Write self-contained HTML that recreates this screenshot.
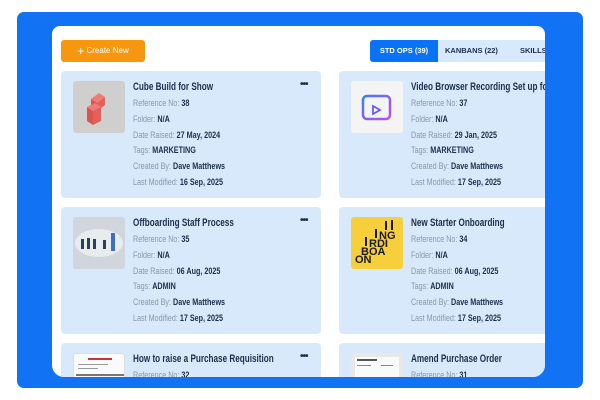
<!DOCTYPE html>
<html><head><style>
*{margin:0;padding:0;box-sizing:border-box}
html,body{width:600px;height:400px;overflow:hidden}
body{background:#fff;position:relative;font-family:"Liberation Sans",sans-serif}
.frame{position:absolute;left:17px;top:12px;width:566px;height:376px;background:#1173f4;border-radius:7px}
.panel{position:absolute;left:52px;top:26px;width:493px;height:351px;background:#fff;border-radius:8px 8px 12px 12px;overflow:hidden}
.btn{position:absolute;left:9px;top:14px;width:84px;height:22px;background:#f7960f;border-radius:3px;color:#fff;font-size:8px;line-height:22px;text-align:center;white-space:nowrap}
.btn b{font-size:12px;font-weight:400;vertical-align:top}
.tabs{position:absolute;left:318px;top:14px;height:22px;width:200px;background:#d8e9fc;border-radius:3px;font-size:7.5px;font-weight:bold;color:#1b2f4d}
.tabs span{position:absolute;top:0;line-height:22px;white-space:nowrap}
.tab1{left:0;width:68px;height:22px;background:#0a72f5;color:#fff;border-radius:3px 0 0 3px;text-align:center}
.card{position:absolute;width:260px;height:127px;background:#d8e9fc;border-radius:4px;overflow:hidden}
.thumb{position:absolute;left:12px;top:10px;width:52px;height:52px;border-radius:3px;background:#d9d9d9;overflow:hidden}
.t{position:absolute;left:72px;top:10px;font-size:11px;font-weight:bold;color:#1b2f4d;white-space:nowrap;transform:scaleX(0.74);transform-origin:left}
.l{position:absolute;left:72px;font-size:9px;color:#8a96a8;white-space:nowrap;transform:scaleX(0.8);transform-origin:left}
.l b{color:#1b2f4d}
.dots{position:absolute;left:239px;top:8px;font-size:10px;font-weight:bold;color:#1b2f4d;letter-spacing:-1px}
</style></head><body>
<div class="frame"></div>
<div class="panel">
<div class="btn"><b>+</b>&nbsp;Create New</div>
<div class="tabs"><span class="tab1">STD OPS (39)</span><span style="left:75px">KANBANS (22)</span><span style="left:150px">SKILLS</span></div>

<div class="card" style="left:9px;top:45px">
<div class="thumb" style="background:#cfcfcd"><svg width="52" height="52"><polygon points="18,18 26,12 32,16 24,22" fill="#f07a78"/><polygon points="18,18 24,22 24,30 18,26" fill="#d9534f"/><polygon points="24,22 32,16 32,24 24,30" fill="#e35f5c"/><polygon points="14,26 22,22 28,26 20,30" fill="#f07a78"/><polygon points="20,30 28,26 28,40 20,44" fill="#e35f5c"/><polygon points="14,26 20,30 20,44 14,40" fill="#d9534f"/></svg></div>
<div class="t">Cube Build for Show</div><div class="dots">•••</div>
<div class="l" style="top:27px">Reference No: <b>38</b></div>
<div class="l" style="top:43px">Folder: <b>N/A</b></div>
<div class="l" style="top:59px">Date Raised: <b>27 May, 2024</b></div>
<div class="l" style="top:74px">Tags: <b>MARKETING</b></div>
<div class="l" style="top:90px">Created By: <b>Dave Matthews</b></div>
<div class="l" style="top:106px">Last Modified: <b>16 Sep, 2025</b></div>
</div>

<div class="card" style="left:287px;top:45px">
<div class="thumb" style="background:#f4f4f4"><svg width="52" height="52"><defs><linearGradient id="g" x1="0" y1="0" x2="1" y2="1"><stop offset="0" stop-color="#3b7cf5"/><stop offset="1" stop-color="#c04cf0"/></linearGradient></defs><rect x="12" y="15" width="27" height="23" rx="4" fill="none" stroke="url(#g)" stroke-width="2.5"/><line x1="12" y1="21" x2="39" y2="21" stroke="url(#g)" stroke-width="2"/><path d="M22 25 L29 29 L22 33 Z" fill="none" stroke="#6a5cf2" stroke-width="1.8"/></svg></div>
<div class="t">Video Browser Recording Set up for</div>
<div class="l" style="top:27px">Reference No: <b>37</b></div>
<div class="l" style="top:43px">Folder: <b>N/A</b></div>
<div class="l" style="top:59px">Date Raised: <b>29 Jan, 2025</b></div>
<div class="l" style="top:74px">Tags: <b>MARKETING</b></div>
<div class="l" style="top:90px">Created By: <b>Dave Matthews</b></div>
<div class="l" style="top:106px">Last Modified: <b>17 Sep, 2025</b></div>
</div>

<div class="card" style="left:9px;top:181px">
<div class="thumb" style="background:#d0d6dc"><svg width="52" height="52"><ellipse cx="26" cy="26" rx="24" ry="14" fill="#e8ecef"/><g fill="#2d3e57"><rect x="8" y="22" width="3" height="10"/><rect x="14" y="21" width="3" height="11"/><rect x="20" y="22" width="3" height="10"/><rect x="30" y="23" width="3" height="9"/><rect x="38" y="16" width="4" height="18" fill="#3a6fc4"/></g></svg></div>
<div class="t">Offboarding Staff Process</div><div class="dots">•••</div>
<div class="l" style="top:27px">Reference No: <b>35</b></div>
<div class="l" style="top:43px">Folder: <b>N/A</b></div>
<div class="l" style="top:59px">Date Raised: <b>06 Aug, 2025</b></div>
<div class="l" style="top:74px">Tags: <b>ADMIN</b></div>
<div class="l" style="top:90px">Created By: <b>Dave Matthews</b></div>
<div class="l" style="top:106px">Last Modified: <b>17 Sep, 2025</b></div>
</div>

<div class="card" style="left:287px;top:181px">
<div class="thumb" style="background:#f6cf3a"><svg width="52" height="52"><g font-family="Liberation Sans" font-weight="bold" font-size="11" fill="#1a1a1a"><text x="28" y="22">NG</text><text x="18" y="30">RDI</text><text x="10" y="38">BOA</text><text x="4" y="46">ON</text></g><g fill="#1a1a1a"><rect x="34" y="4" width="2" height="9"/><rect x="40" y="3" width="2" height="10"/><rect x="24" y="12" width="2" height="9"/><rect x="14" y="20" width="2" height="9"/></g></svg></div>
<div class="t">New Starter Onboarding</div>
<div class="l" style="top:27px">Reference No: <b>34</b></div>
<div class="l" style="top:43px">Folder: <b>N/A</b></div>
<div class="l" style="top:59px">Date Raised: <b>06 Aug, 2025</b></div>
<div class="l" style="top:74px">Tags: <b>ADMIN</b></div>
<div class="l" style="top:90px">Created By: <b>Dave Matthews</b></div>
<div class="l" style="top:106px">Last Modified: <b>17 Sep, 2025</b></div>
</div>

<div class="card" style="left:9px;top:317px">
<div class="thumb" style="background:#fafafa;border:1px solid #ddd"><svg width="52" height="52"><rect x="14" y="4" width="24" height="2" fill="#c33"/><rect x="4" y="10" width="30" height="1" fill="#999"/><rect x="4" y="14" width="20" height="1" fill="#999"/><rect x="2" y="20" width="48" height="2" fill="#777"/></svg></div>
<div class="t">How to raise a Purchase Requisition</div><div class="dots">•••</div>
<div class="l" style="top:27px">Reference No: <b>32</b></div>
</div>

<div class="card" style="left:287px;top:317px">
<div class="thumb" style="background:#e8e8e8"><svg width="52" height="52"><rect x="4" y="4" width="44" height="46" fill="#fafafa"/><rect x="6" y="6" width="20" height="2" fill="#555"/><rect x="6" y="12" width="14" height="1" fill="#888"/><rect x="30" y="12" width="12" height="1" fill="#888"/></svg></div>
<div class="t">Amend Purchase Order</div>
<div class="l" style="top:27px">Reference No: <b>31</b></div>
</div>
</div>
</body></html>
